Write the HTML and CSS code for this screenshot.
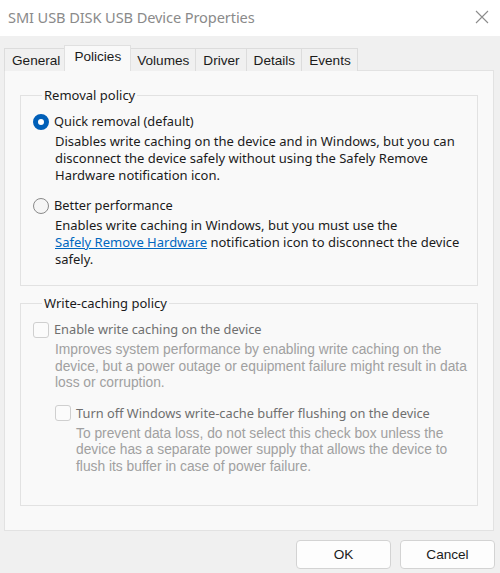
FILE: index.html
```html
<!DOCTYPE html>
<html>
<head>
<meta charset="utf-8">
<link rel="stylesheet" href="styles.css">
</head>
<body>
<div class="window">
  <div class="titlebar">
    <span class="title">SMI USB DISK USB Device Properties</span>
    <svg class="close" width="14" height="14" viewBox="0 0 14 14"><path d="M1 1 L13 13 M13 1 L1 13" stroke="#8c8c8c" stroke-width="1.1" fill="none"/></svg>
  </div>
  <div class="tabs">
    <div class="tab">General</div>
    <div class="tab active">Policies</div>
    <div class="tab">Volumes</div>
    <div class="tab">Driver</div>
    <div class="tab">Details</div>
    <div class="tab">Events</div>
  </div>
  <div class="panel">
    <fieldset class="group group-removal">
      <legend>Removal policy</legend>
      <div class="option">
        <span class="radio checked"></span>
        <span class="label">Quick removal (default)</span>
      </div>
      <p class="desc">Disables write caching on the device and in Windows, but you can disconnect the device safely without using the Safely Remove Hardware notification icon.</p>
      <div class="option">
        <span class="radio"></span>
        <span class="label">Better performance</span>
      </div>
      <p class="desc">Enables write caching in Windows, but you must use the <a class="link">Safely Remove Hardware</a> notification icon to disconnect the device safely.</p>
    </fieldset>
    <fieldset class="group group-cache">
      <legend>Write-caching policy</legend>
      <div class="option disabled">
        <span class="check"></span>
        <span class="label">Enable write caching on the device</span>
      </div>
      <p class="desc disabled">Improves system performance by enabling write caching on the device, but a power outage or equipment failure might result in data loss or corruption.</p>
      <div class="sub">
        <div class="option disabled">
          <span class="check"></span>
          <span class="label">Turn off Windows write-cache buffer flushing on the device</span>
        </div>
        <p class="desc disabled sub-desc">To prevent data loss, do not select this check box unless the device has a separate power supply that allows the device to flush its buffer in case of power failure.</p>
      </div>
    </fieldset>
  </div>
  <div class="buttons">
    <button class="btn">OK</button>
    <button class="btn">Cancel</button>
  </div>
</div>
</body>
</html>
```

FILE: styles.css
```css
html, body {
  margin: 0;
  padding: 0;
}
body {
  width: 500px;
  height: 573px;
  overflow: hidden;
  background: #f0f0f0;
  font-family: "Noto Sans", "Liberation Sans", sans-serif;
  color: #1b1b1b;
}
.window {
  display: flex;
  flex-direction: column;
}
.titlebar {
  height: 36px;
  background: #ffffff;
  display: flex;
  align-items: center;
  justify-content: space-between;
  padding: 0 12px 2px 8px;
  box-sizing: border-box;
}
.title {
  font-size: 14.6px;
  color: #8a8a8a;
  letter-spacing: -0.1px;
}
.close {
  margin-top: -1px;
  margin-right: -1px;
}
.tabs {
  display: flex;
  align-items: flex-end;
  padding: 0 0 0 4px;
  margin-top: 9px;
  height: 25px;
  position: relative;
  z-index: 2;
}
.tab {
  font-family: "Liberation Sans", sans-serif;
  font-size: 13.6px;
  color: #1b1b1b;
  height: 23px;
  box-sizing: border-box;
  padding: 4px 6px 0 7px;
  border: 1px solid #dcdcdc;
  border-bottom: none;
  margin-right: -1px;
  background: #f0f0f0;
  margin-bottom: -1px;
}
.tab.active {
  height: 26px;
  background: #f9f9f9;
  padding: 3px 9px 0 9px;
  margin-left: -2px;
  margin-right: -2px;
  border-color: #e0e0e0;
  position: relative;
  z-index: 3;
}
.panel {
  margin: 0 6px 0 4px;
  height: 461px;
  box-sizing: border-box;
  border: 1px solid #e2e2e2;
  background: #f9f9f9;
  padding: 16px 15px 0 15px;
  position: relative;
  z-index: 1;
}
.group {
  margin: 0;
  border: 1px solid #e2e2e2;
  padding: 0 10px 0 12px;
  min-width: 0;
}
.group legend {
  font-size: 13px;
  line-height: 17px;
  padding: 0 2px;
  margin-left: 9px;
  color: #1b1b1b;
}
.group-removal {
  height: 199px;
  box-sizing: border-box;
  padding-top: 8px;
}
.group-cache {
  margin-top: 9px;
  height: 211px;
  box-sizing: border-box;
  padding-top: 8px;
}
.option {
  display: flex;
  align-items: center;
  gap: 5px;
  height: 19px;
  font-size: 12.8px;
}
.option .label {
  line-height: 17px;
}
.radio {
  width: 16px;
  height: 16px;
  box-sizing: border-box;
  border-radius: 50%;
  border: 1px solid #8a8a8a;
  background: #f5f5f5;
  flex: none;
}
.radio.checked {
  border: 5px solid #005fb8;
  background: #ffffff;
}
.check {
  width: 16px;
  height: 16px;
  box-sizing: border-box;
  border-radius: 3px;
  border: 1px solid #cfcfcf;
  background: #fbfbfb;
  flex: none;
}
.desc {
  margin: 2px 0 13px 22px;
  font-size: 13px;
  line-height: 16.8px;
}
.link {
  color: #0067c0;
  text-decoration: underline;
  white-space: nowrap;
}
.option.disabled .label {
  color: #6f6f6f;
}
.desc.disabled {
  font-family: "Liberation Sans", sans-serif;
  color: #a0a0a0;
  font-size: 13.8px;
  line-height: 16.6px;
  margin-top: 3px;
}
.sub {
  margin-left: 22px;
  margin-top: -1px;
}
.sub-desc {
  margin-left: 21px;
}
.buttons {
  display: flex;
  justify-content: flex-end;
  gap: 9px;
  padding: 9px 5px 0 0;
}
.btn {
  width: 95px;
  height: 29px;
  font-family: "Liberation Sans", sans-serif;
  font-size: 13.6px;
  color: #1b1b1b;
  background: #fdfdfd;
  border: 1px solid #d3d3d3;
  border-radius: 4px;
  padding: 0;
}
```
